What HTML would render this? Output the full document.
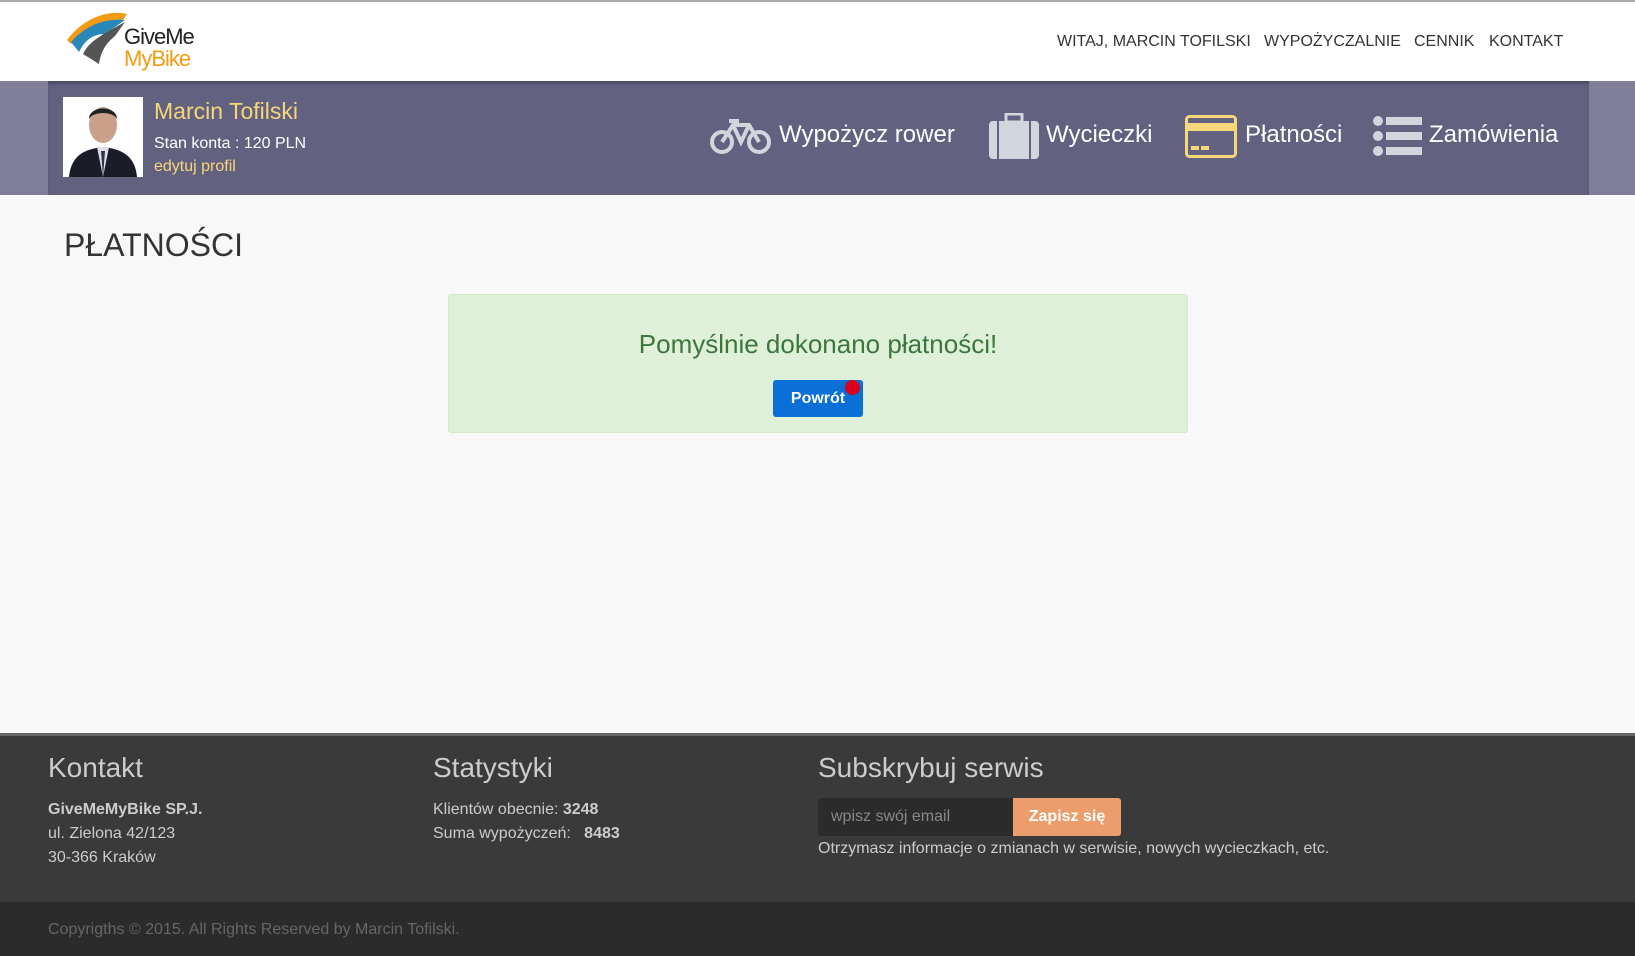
<!DOCTYPE html>
<html><head><meta charset="utf-8"><style>
*{margin:0;padding:0;box-sizing:border-box}
body{width:1635px;height:956px;overflow:hidden;background:#f8f8f8;font-family:"Liberation Sans",sans-serif;position:relative}
.a{position:absolute;white-space:nowrap}
#hdr{position:absolute;left:0;top:0;width:1635px;height:81px;background:#fff;border-top:2px solid #aaa}
.nav{top:33px;font-size:16px;color:#333}
#band{position:absolute;left:0;top:81px;width:1635px;height:114px;background:#817e99}
#bandin{position:absolute;left:48px;top:81px;width:1541px;height:114px;background:#636180;box-shadow:inset 0 4px 4px -2px rgba(0,0,0,.3)}
.mi{top:121px;font-size:24px;color:#fff}
#foot{position:absolute;left:0;top:733px;width:1635px;height:169px;background:#3a3a3a;border-top:3px solid #666}
#fb{position:absolute;left:0;top:902px;width:1635px;height:54px;background:#2b2b2b}
.fh{top:752px;font-size:28px;color:#ccc}
.ft{font-size:16px;color:#ccc}
</style></head><body>
<div id="hdr"></div>
<svg class="a" style="left:65px;top:8px" width="70" height="60" viewBox="0 0 70 60">
<path d="M2 32 C20 8 45 2 62 6 L58 12 C40 10 22 18 6 36Z" fill="#f39c12"/>
<path d="M6 34 C22 16 42 10 60 12 L40 26 C28 26 20 32 14 44Z" fill="#2a88b8"/>
<path d="M18 46 C24 34 34 28 60 14 L50 28 C40 36 36 44 34 56Z" fill="#555"/>
</svg>
<div class="a" style="left:124px;top:24px;font-size:22px;color:#222;letter-spacing:-1px">GiveMe</div>
<div class="a" style="left:124px;top:46px;font-size:22px;color:#f39c12;letter-spacing:-1px">MyBike</div>
<div class="a nav" style="left:1057px">WITAJ, MARCIN TOFILSKI</div>
<div class="a nav" style="left:1264px">WYPOŻYCZALNIE</div>
<div class="a nav" style="left:1414px">CENNIK</div>
<div class="a nav" style="left:1489px">KONTAKT</div>
<div id="band"></div><div id="bandin"></div>
<svg class="a" style="left:63px;top:97px" width="80" height="80" viewBox="0 0 80 80"><rect width="80" height="80" fill="#fff"/><ellipse cx="40" cy="28" rx="14" ry="18" fill="#c9a08a"/><path d="M26 22 C26 8 54 8 54 22 C50 14 30 14 26 22Z" fill="#222"/><path d="M6 80 C8 58 22 52 40 50 C58 52 72 58 74 80Z" fill="#1a1c28"/><path d="M34 50 L40 80 L46 50Z" fill="#dde"/><path d="M38 54 L40 80 L42 54Z" fill="#334"/></svg>
<div class="a" style="left:154px;top:98px;font-size:23px;color:#f5d77a">Marcin Tofilski</div>
<div class="a" style="left:154px;top:135px;font-size:16px;color:#fff">Stan konta : 120 PLN</div>
<div class="a" style="left:154px;top:158px;font-size:16px;color:#f5d77a">edytuj profil</div>
<svg class="a" style="left:709px;top:117px" width="63" height="38" viewBox="0 0 63 38" fill="none" stroke="#d0d6dc" stroke-width="4"><circle cx="13" cy="25" r="10"/><circle cx="50" cy="25" r="10"/><path d="M13 25 L24 8 L40 8 L50 25 M24 8 L32 25 L40 8 M20 4 H30"/></svg>
<div class="a mi" style="left:779px">Wypożycz rower</div>
<svg class="a" style="left:989px;top:113px" width="50" height="46" viewBox="0 0 50 46"><rect x="17" y="1" width="16" height="8" fill="none" stroke="#d0d6dc" stroke-width="3"/><rect x="0" y="8" width="50" height="38" rx="4" fill="#d0d6dc"/><rect x="8" y="8" width="2" height="38" fill="#636180"/><rect x="40" y="8" width="2" height="38" fill="#636180"/></svg>
<div class="a mi" style="left:1046px">Wycieczki</div>
<svg class="a" style="left:1185px;top:115px" width="52" height="43" viewBox="0 0 52 43"><rect x="1.5" y="1.5" width="49" height="40" rx="3" fill="none" stroke="#f5d77a" stroke-width="3"/><rect x="1" y="8" width="50" height="8" fill="#f5d77a"/><rect x="6" y="31" width="8" height="4" fill="#f5d77a"/><rect x="16" y="31" width="8" height="4" fill="#f5d77a"/></svg>
<div class="a mi" style="left:1245px">Płatności</div>
<svg class="a" style="left:1373px;top:116px" width="49" height="40" viewBox="0 0 49 40" fill="#d0d6dc"><circle cx="5" cy="5" r="5"/><circle cx="5" cy="20" r="5"/><circle cx="5" cy="35" r="5"/><rect x="13" y="1" width="36" height="8"/><rect x="13" y="16" width="36" height="8"/><rect x="13" y="31" width="36" height="8"/></svg>
<div class="a mi" style="left:1429px">Zamówienia</div>
<div class="a" style="left:64px;top:227px;font-size:32px;color:#333">PŁATNOŚCI</div>
<div class="a" style="left:448px;top:294px;width:740px;height:139px;background:#dff0d8;border:1px solid #d6e9c6;border-radius:3px"></div>
<div class="a" style="left:448px;top:329px;width:740px;text-align:center;font-size:26px;color:#3c763d">Pomyślnie dokonano płatności!</div>
<div class="a" style="left:773px;top:380px;width:90px;height:37px;background:#0a6fd6;border-radius:3px;color:#fff;font-weight:bold;font-size:16px;text-align:center;line-height:37px">Powrót</div>
<div class="a" style="left:845px;top:380px;width:15px;height:15px;border-radius:50%;background:#d9001b"></div>
<div id="foot"></div><div id="fb"></div>
<div class="a fh" style="left:48px">Kontakt</div>
<div class="a fh" style="left:433px">Statystyki</div>
<div class="a fh" style="left:818px">Subskrybuj serwis</div>
<div class="a ft" style="left:48px;top:801px;font-weight:bold">GiveMeMyBike SP.J.</div>
<div class="a ft" style="left:48px;top:825px">ul. Zielona 42/123</div>
<div class="a ft" style="left:48px;top:849px">30-366 Kraków</div>
<div class="a ft" style="left:433px;top:801px">Klientów obecnie: <b>3248</b></div>
<div class="a ft" style="left:433px;top:825px">Suma wypożyczeń: &nbsp; <b>8483</b></div>
<div class="a" style="left:818px;top:798px;width:195px;height:38px;background:#2b2b2b;border-radius:3px 0 0 3px;color:#888;font-size:16px;line-height:38px;padding-left:13px">wpisz swój email</div>
<div class="a" style="left:1013px;top:798px;width:108px;height:38px;background:#eb9e6b;border-radius:0 3px 3px 0;color:#fff;font-weight:bold;font-size:16px;line-height:38px;text-align:center">Zapisz się</div>
<div class="a ft" style="left:818px;top:840px">Otrzymasz informacje o zmianach w serwisie, nowych wycieczkach, etc.</div>
<div class="a" style="left:48px;top:921px;font-size:16px;color:#666">Copyrigths © 2015. All Rights Reserved by Marcin Tofilski.</div>
</body></html>
